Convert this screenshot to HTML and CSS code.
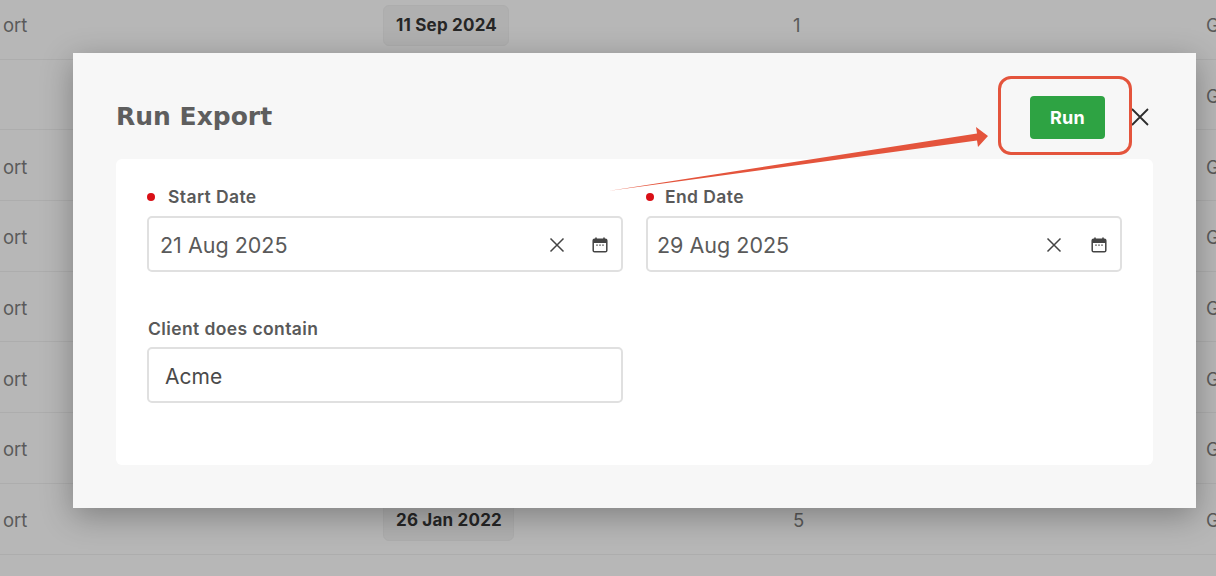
FILE: index.html
```html
<!DOCTYPE html>
<html lang="en">
  <head>
    <meta charset="UTF-8" />
    <title>Run Export</title>
    <link rel="stylesheet" href="styles.css">
  </head>
  <body>
    <div class="table">
      <div class="row"><span class="cell-name">ort</span><span class="cell-date"><span class="chip">11 Sep 2024</span></span><span class="cell-count">1</span><span class="cell-end">G</span></div>
      <div class="row"><span class="cell-name"></span><span class="cell-date"></span><span class="cell-count"></span><span class="cell-end">G</span></div>
      <div class="row"><span class="cell-name">ort</span><span class="cell-date"></span><span class="cell-count"></span><span class="cell-end">G</span></div>
      <div class="row"><span class="cell-name">ort</span><span class="cell-date"></span><span class="cell-count"></span><span class="cell-end">G</span></div>
      <div class="row"><span class="cell-name">ort</span><span class="cell-date"></span><span class="cell-count"></span><span class="cell-end">G</span></div>
      <div class="row"><span class="cell-name">ort</span><span class="cell-date"></span><span class="cell-count"></span><span class="cell-end">G</span></div>
      <div class="row"><span class="cell-name">ort</span><span class="cell-date"></span><span class="cell-count"></span><span class="cell-end">G</span></div>
      <div class="row"><span class="cell-name">ort</span><span class="cell-date"><span class="chip">26 Jan 2022</span></span><span class="cell-count">5</span><span class="cell-end">G</span></div>
    </div>

    <div class="modal">
      <div class="modal__head">
        <h1 class="modal__title">Run Export</h1>
        <button class="btn-run" type="button">Run</button>
        <svg class="modal__close" viewBox="0 0 20 20" width="20" height="20">
          <path d="M2 2 L18 18 M18 2 L2 18" fill="none" stroke="#2c2c2c" stroke-width="1.8" />
        </svg>
      </div>
      <div class="panel">
        <div class="field">
          <label class="field__label field__label--req">Start Date</label>
          <div class="input input--date">
            <span class="input__value">21 Aug 2025</span>
            <svg class="icon-x" viewBox="0 0 16 16" width="16" height="16"><path d="M1.5 1.5 L14.5 14.5 M14.5 1.5 L1.5 14.5" fill="none" stroke="#444" stroke-width="1.5" /></svg>
            <svg class="icon-cal" viewBox="0 0 16 16" width="16" height="16"><path d="M4 0.5 V3 M12 0.5 V3" stroke="#444" stroke-width="1.6" /><rect x="1.2" y="2.2" width="13.6" height="12.6" rx="1.4" fill="none" stroke="#444" stroke-width="1.5" /><rect x="1.2" y="2.2" width="13.6" height="3.8" fill="#444" /><path d="M4 8.2 H12" stroke="#777" stroke-width="1.3" stroke-dasharray="2 1" /></svg>
          </div>
        </div>
        <div class="field field--end">
          <label class="field__label field__label--req">End Date</label>
          <div class="input input--date">
            <span class="input__value">29 Aug 2025</span>
            <svg class="icon-x" viewBox="0 0 16 16" width="16" height="16"><path d="M1.5 1.5 L14.5 14.5 M14.5 1.5 L1.5 14.5" fill="none" stroke="#444" stroke-width="1.5" /></svg>
            <svg class="icon-cal" viewBox="0 0 16 16" width="16" height="16"><path d="M4 0.5 V3 M12 0.5 V3" stroke="#444" stroke-width="1.6" /><rect x="1.2" y="2.2" width="13.6" height="12.6" rx="1.4" fill="none" stroke="#444" stroke-width="1.5" /><rect x="1.2" y="2.2" width="13.6" height="3.8" fill="#444" /><path d="M4 8.2 H12" stroke="#777" stroke-width="1.3" stroke-dasharray="2 1" /></svg>
          </div>
        </div>
        <div class="field field--client">
          <label class="field__label">Client does contain</label>
          <div class="input input--text">
            <span class="input__value input__value--dark">Acme</span>
          </div>
        </div>
      </div>
    </div>

    <!-- annotation drawn over the screenshot -->
    <div class="callout"></div>
    <svg class="arrow" viewBox="0 0 1216 576" width="1216" height="576">
      <polygon points="608,191 977,133.5 976,127 988,136 978,147 977,140.5" fill="#e4543c" />
    </svg>
  </body>
</html>
```

FILE: styles.css
```css
* {
  box-sizing: border-box;
  margin: 0;
  padding: 0;
}
html,
body {
  height: 576px;
  overflow: hidden;
}
body {
  background: #b7b7b7;
  color: #555;
  font-family: Inter, "Liberation Sans", sans-serif;
  position: relative;
}

/* Table behind the dialog */
.table {
  margin-top: -11px;
}
.row {
  display: grid;
  grid-template-columns: 383px 380px 1fr 10px;
  align-items: center;
  height: 70.7px;
  padding-top: 3px;
  border-bottom: 1px solid #adadad;
  font-size: 18.5px;
  color: #5a5a5a;
}
.cell-name {
  padding-left: 3px;
}
.cell-count {
  padding-left: 30px;
}
.chip {
  display: inline-block;
  background: #b0b0b0;
  border: 1px solid #adadad;
  border-radius: 6px;
  color: #262626;
  font-size: 17px;
  font-weight: 700;
  letter-spacing: 0.2px;
  line-height: 39px;
  padding: 0 11px 0 12px;
}

/* Dialog */
.modal {
  position: absolute;
  left: 73px;
  top: 53px;
  width: 1123px;
  height: 455px;
  background: #f7f7f7;
  box-shadow: 0 8px 30px rgba(0, 0, 0, 0.3);
  padding: 0 43px;
}
.modal__head {
  display: flex;
  align-items: center;
  height: 106px;
  padding-top: 22px;
}
.modal__title {
  flex: 1;
  color: #5e5e5e;
  font-family: "DejaVu Sans", sans-serif;
  font-size: 25px;
  font-weight: 700;
  margin-top: -2px;
}
.btn-run {
  background: #2ea343;
  border: 0;
  border-radius: 4px;
  color: #fff;
  font: 700 18px Inter, sans-serif;
  letter-spacing: 0.3px;
  width: 75px;
  height: 43px;
}
.modal__close {
  margin-left: 25px;
  margin-right: 3px;
}
.panel {
  display: grid;
  grid-template-columns: 476px 476px;
  column-gap: 23px;
  align-content: start;
  height: 306px;
  background: #fff;
  border-radius: 6px;
  padding: 26px 31px 0;
}
.field__label {
  display: block;
  position: relative;
  color: #595959;
  font-size: 17.5px;
  font-weight: 600;
  letter-spacing: 0.4px;
  line-height: 24px;
  height: 31px;
  padding-left: 21px;
}
.field__label--req::before {
  content: "";
  position: absolute;
  left: 0;
  top: 8px;
  width: 8px;
  height: 8px;
  border-radius: 50%;
  background: #d90f16;
}
.field--end .field__label {
  padding-left: 19px;
}
.field--client {
  grid-column: 1;
  margin-top: 45px;
}
.field--client .field__label {
  height: 30px;
  padding-left: 1px;
}
.input {
  display: flex;
  align-items: center;
  height: 56px;
  background: #fff;
  border: 2px solid #e0e0e0;
  border-radius: 5px;
}
.input--date {
  padding: 1px 13px 0 11px;
}
.input--text {
  padding: 3px 16px 0;
}
.field--end .input--date {
  padding-left: 9px;
}
.input__value {
  flex: 1;
  color: #5a5a5a;
  font-size: 21.5px;
}
.input__value--dark {
  color: #4a4a4a;
  font-size: 21px;
}
.icon-x {
  margin-right: 27px;
}
.field--end .icon-x {
  margin-right: 29px;
}

/* Annotation */
.callout {
  position: absolute;
  left: 998px;
  top: 76px;
  width: 134px;
  height: 79px;
  border: 3.5px solid #e4543c;
  border-radius: 13px;
}
.arrow {
  position: absolute;
  left: 0;
  top: 0;
}
```
